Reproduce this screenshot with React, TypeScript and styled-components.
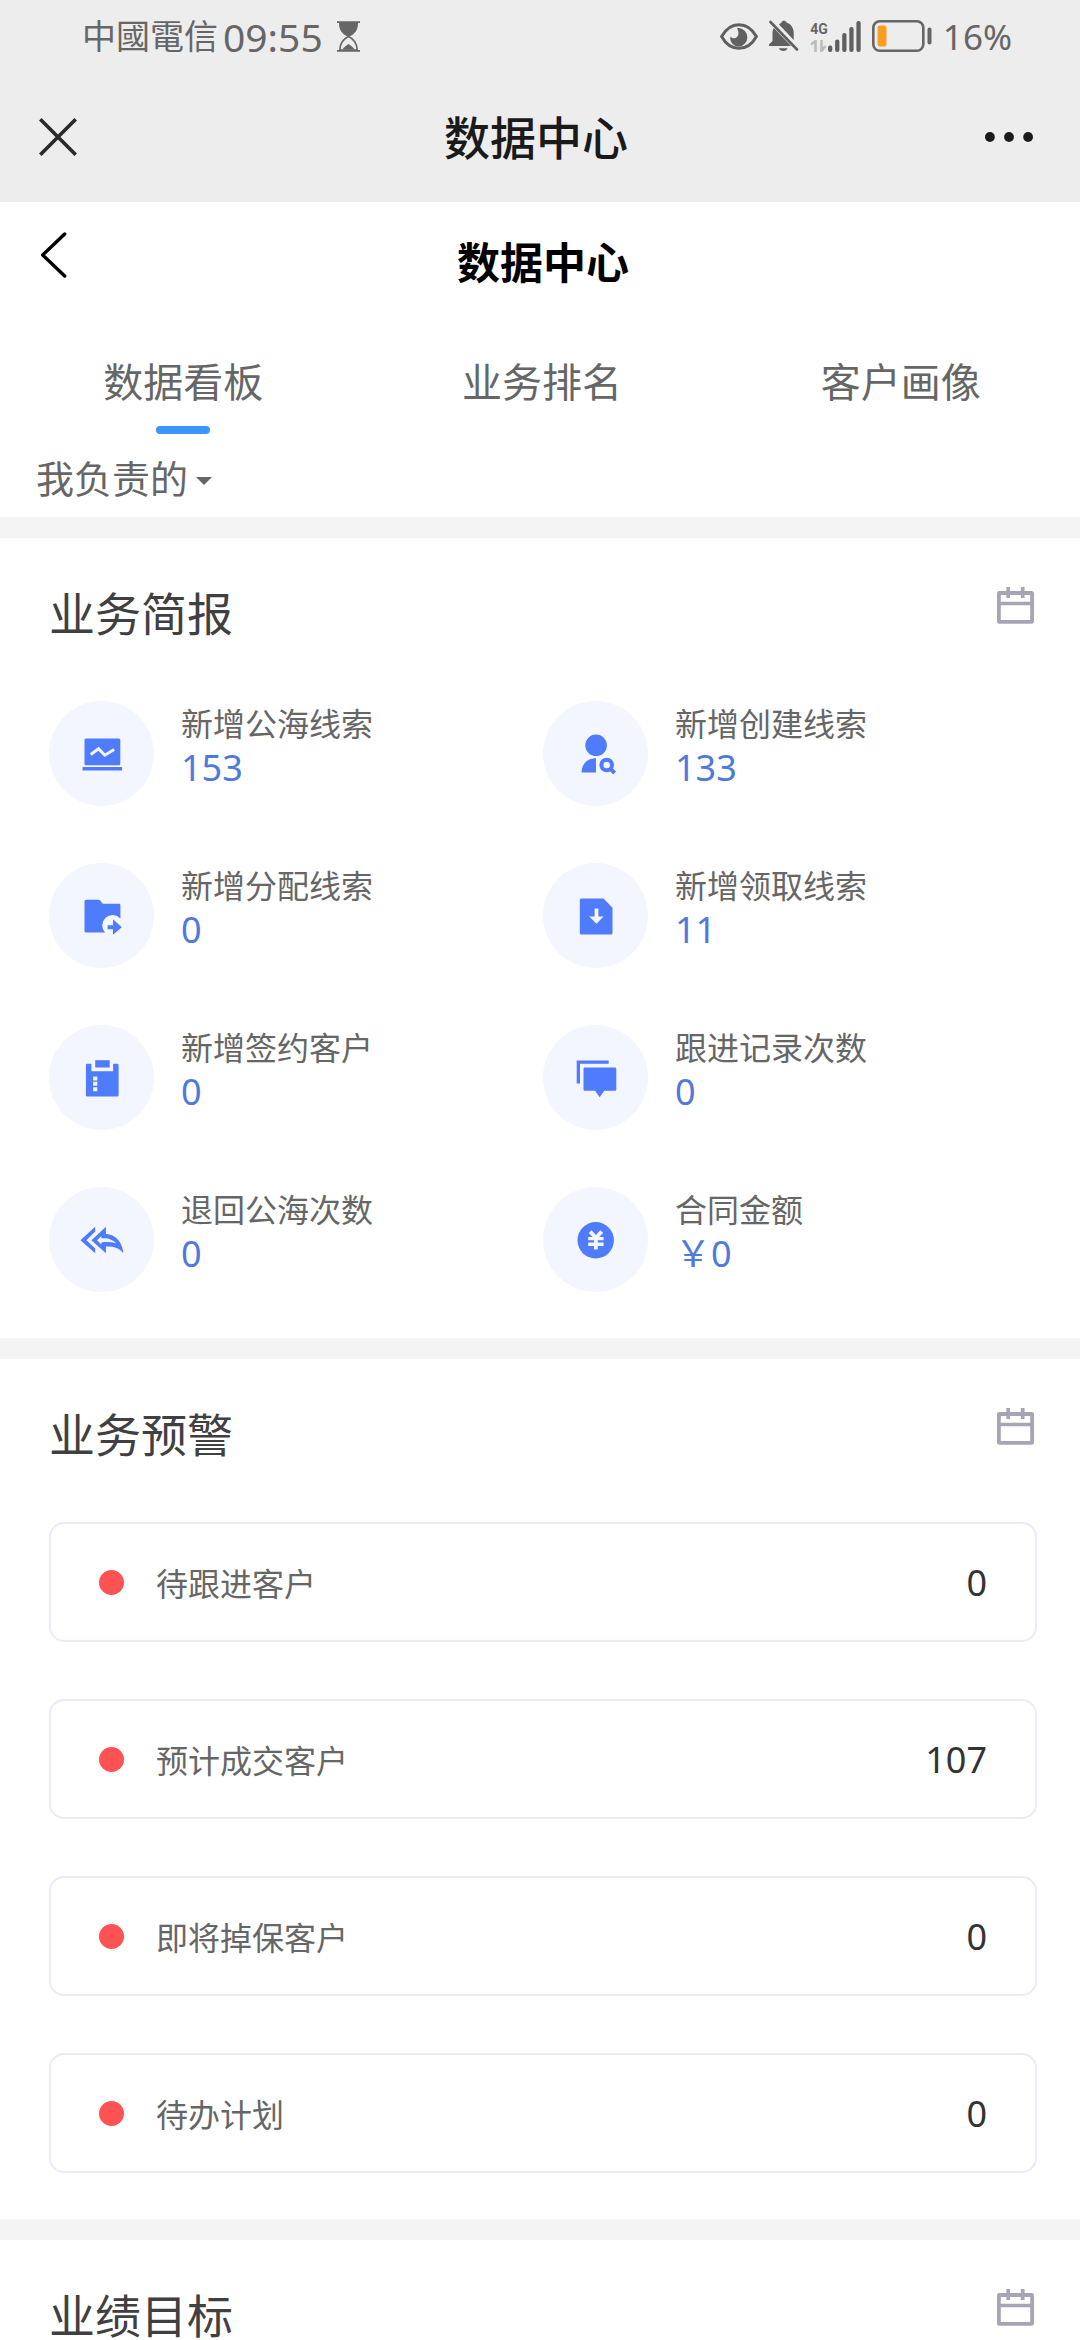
import React, { useState } from 'react';
import styled, { createGlobalStyle } from 'styled-components';

const GlobalStyle = createGlobalStyle`
  *, *::before, *::after { box-sizing: border-box; }
  body {
    margin: 0;
    background: #fff;
    color: #666;
    font-family: "Noto Sans", "Noto Sans CJK SC", sans-serif;
    font-size: 32px;
  }
  h1, h2, p, ul { margin: 0; padding: 0; }
  ul { list-style: none; }
  button, select { font: inherit; color: inherit; }
  svg { display: block; }
`;

const TopArea = styled.header`
  background: #ededed;
`;

const StatusBar = styled.div`
  display: flex;
  align-items: center;
  justify-content: space-between;
  height: 72px;
  padding: 0 68px 0 82px;
`;

const StatusGroup = styled.div<{ $gap: number }>`
  display: flex;
  align-items: center;
  gap: ${(p) => p.$gap}px;
`;

const Carrier = styled.span`
  font-family: "Noto Sans", "Noto Sans CJK TC", sans-serif;
  font-size: 34px;
  line-height: 44px;
`;

const Clock = styled.time`
  margin: 0 14px 0 5px;
  padding-top: 2px;
  font-size: 39px;
  line-height: 44px;
`;

const Percent = styled.span`
  padding-top: 2px;
  font-size: 35px;
  line-height: 44px;
`;

const Network = styled.div`
  display: flex;
  align-items: flex-end;
`;

const NetworkType = styled.div`
  display: flex;
  flex-direction: column;
  gap: 3px;
  font-family: Roboto, sans-serif;
  font-size: 14px;
  font-weight: 700;
  line-height: 16px;
`;

const NavBar = styled.div`
  display: grid;
  grid-template-columns: 1fr auto 1fr;
  align-items: center;
  height: 130px;
  padding: 0 42px 0 34px;
  color: #1a1a1a;
`;

const NavTitle = styled.p`
  font-size: 46px;
  font-weight: 500;
  line-height: 56px;
`;

const IconButton = styled.button<{ $end?: boolean }>`
  justify-self: ${(p) => (p.$end ? 'end' : 'start')};
  padding: 5px;
  border: 0;
  background: none;
  cursor: pointer;
`;

const PageHeader = styled.div`
  display: grid;
  grid-template-columns: 1fr auto 1fr;
  align-items: center;
  height: 122px;
  padding: 0 30px 0 36px;
  color: #000;
`;

const BackButton = styled(IconButton)`
  align-self: start;
  margin-top: 25px;
`;

const PageTitle = styled.h1`
  font-size: 43px;
  font-weight: 700;
  line-height: 56px;
`;

const Tabs = styled.div`
  display: flex;
  padding-left: 4px;
`;

const Tab = styled.button<{ $active: boolean }>`
  flex: 1;
  display: flex;
  flex-direction: column;
  align-items: center;
  gap: 18px;
  padding: 32px 0 0;
  border: 0;
  background: none;
  font-size: 40px;
  line-height: 52px;
  cursor: pointer;

  &::after {
    content: '';
    width: 54px;
    height: 8px;
    border-radius: 4px;
    background: ${(p) => (p.$active ? '#3b95fb' : 'transparent')};
  }
`;

const Filter = styled.label`
  display: flex;
  align-items: center;
  gap: 7px;
  padding: 20px 36px 15px;
`;

const FilterSelect = styled.select`
  appearance: none;
  padding: 0;
  border: 0;
  background: none;
  font-size: 38px;
  line-height: 48px;
`;

const Caret = styled.span`
  margin-top: 6px;
  border: 8px solid transparent;
  border-top-color: #666;
  border-bottom: 0;
  pointer-events: none;
`;

const Section = styled.section<{ $last?: boolean }>`
  padding: 49px 43px ${(p) => (p.$last ? 0 : 46)}px 49px;
  border-top: 21px solid #f4f4f4;
`;

const SectionHead = styled.div`
  display: flex;
  align-items: flex-start;
  justify-content: space-between;
`;

const SectionTitle = styled.h2`
  padding-top: 3px;
  color: #404040;
  font-size: 46px;
  font-weight: 400;
  line-height: 46px;
`;

const CalendarButton = styled.button`
  padding: 0 3px;
  border: 0;
  background: none;
  cursor: pointer;
`;

const Metrics = styled.ul`
  display: grid;
  grid-template-columns: 1fr 1fr;
  row-gap: 57px;
  padding-top: 65px;
`;

const Metric = styled.li`
  display: flex;
  gap: 27px;
`;

const Badge = styled.span`
  display: grid;
  place-items: center;
  flex: none;
  width: 105px;
  height: 105px;
  border-radius: 50%;
  background: #f3f6ff;
`;

const MetricText = styled.div`
  display: flex;
  flex-direction: column;
  padding-top: 1px;
  line-height: 44px;
`;

const MetricValue = styled.span`
  color: #5079dc;
  font-size: 36px;
`;

const Alerts = styled.ul`
  display: flex;
  flex-direction: column;
  gap: 57px;
  padding-top: 65px;
`;

const Alert = styled.li`
  display: flex;
  align-items: center;
  gap: 32px;
  height: 120px;
  padding: 0 48px;
  border: 2px solid #ebeaf6;
  border-radius: 15px;
`;

const Dot = styled.span`
  width: 25px;
  height: 25px;
  border-radius: 50%;
  background: #ff5252;
`;

const AlertValue = styled.span`
  margin-left: auto;
  color: #333;
  font-size: 36px;
`;

const BLUE = '#4f7bfd';
const PALE = '#f3f6ff';

const Glyph = ({ children }: { children: React.ReactNode }) => (
  <svg width="48" height="48" viewBox="0 0 48 48" fill={BLUE} aria-hidden="true">
    {children}
  </svg>
);

const LaptopIcon = () => (
  <Glyph>
    <rect x="6.5" y="8.5" width="35.8" height="26.7" rx="1.5" />
    <rect x="4.5" y="37" width="39.6" height="3.6" rx="0.6" />
    <path d="M12.7 24.5 20.6 18.8 26.8 25.2 36.1 19.5" fill="none" stroke={PALE} strokeWidth="3" />
  </Glyph>
);

const PersonSearchIcon = () => (
  <Glyph>
    <circle cx="24.1" cy="15.3" r="10.8" />
    <path d="M24 28.2V42.5H9.6C9.6 33.8 15.6 28.2 24 28.2Z" />
    <circle cx="34.7" cy="35" r="5.3" fill="none" stroke={BLUE} strokeWidth="4" />
    <path d="M38.2 38.6 42.6 43" stroke={BLUE} strokeWidth="4" />
  </Glyph>
);

const FolderIcon = () => (
  <Glyph>
    <path d="M8 7.8H20.8Q21.6 7.8 22.2 8.6L24.8 11.8H41.2Q42.4 11.8 42.4 13V26.5A10.3 10.3 0 0 0 27 40.6H8Q6.5 40.6 6.5 39.2V9.3Q6.5 7.8 8 7.8Z" />
    <path d="M29.6 33.2H35V27.2L43.8 35.2 35 42.8V37.2H29.6Z" />
  </Glyph>
);

const FileDownIcon = () => (
  <Glyph>
    <path d="M9.2 6.5H31.5L40.5 15.8V41Q40.5 42.5 39 42.5H9.2Q7.8 42.5 7.8 41V8Q7.8 6.5 9.2 6.5Z" />
    <path d="M22.6 16.5H26.4V24.5H31.5L24.5 31.8 17.2 24.5H22.6Z" fill={PALE} />
  </Glyph>
);

const ClipboardIcon = () => (
  <Glyph>
    <path d="M9.2 9.8H13.4V17.2H35.1V9.8H39.2Q40.6 9.8 40.6 11.2V41Q40.6 42.5 39.2 42.5H9.2Q7.9 42.5 7.9 41V11.2Q7.9 9.8 9.2 9.8Z" />
    <rect x="17.2" y="6.2" width="14.5" height="7.3" />
    <path d="M15.1 22.5h4.2v4h-4.2zM15.1 27.8h4.2v4h-4.2zM15.1 33.2h4.2v4h-4.2z" fill={PALE} />
  </Glyph>
);

const ChatIcon = () => (
  <Glyph>
    <path d="M4.7 6.5H36.7V9.8H8V29.5H4.7Z" />
    <path d="M12.9 13.5H42.9Q44.3 13.5 44.3 14.9V35.4Q44.3 36.8 42.9 36.8H32.3L27.7 43.2 23.1 36.8H12.9Q11.5 36.8 11.5 35.4V14.9Q11.5 13.5 12.9 13.5Z" />
  </Glyph>
);

const ReplyAllIcon = () => (
  <Glyph>
    <path d="M17.2 10.8V15.6L8.4 24.2 17.2 32.4V37.2L2.4 24.2Z" />
    <path d="M27.9 10.8V17.9C37.5 18.5 44.3 25.5 45.4 37.2 41 31.8 35.5 30.3 27.9 30.5V37.2L13.4 24.2Z" />
    <path d="M19 24.2 23.4 19.9V22.4C30 21.6 34.8 23.6 38.4 27.6 33.2 25.8 28 25.8 23.4 26.4V28.6Z" fill={PALE} />
  </Glyph>
);

const YuanIcon = () => (
  <Glyph>
    <circle cx="23.7" cy="24.3" r="18.2" />
    <path d="M18.2 15.6 23.9 21.8 29.7 15.6M23.9 20.6V33.6" fill="none" stroke={PALE} strokeWidth="3.8" />
    <path d="M16.2 22.6H31.6M16.2 28.2H31.6" fill="none" stroke={PALE} strokeWidth="3.4" />
  </Glyph>
);

const CalendarIcon = () => (
  <svg width="37" height="37" viewBox="0 0 37 37" fill="none" stroke="#a6a5b5" aria-hidden="true">
    <rect x="1.9" y="6" width="33.2" height="28.9" rx="0.5" strokeWidth="3.8" />
    <path d="M2 16.5H35" strokeWidth="3.3" />
    <path d="M11.2 0V11M25.7 0V11" strokeWidth="3.7" />
  </svg>
);

const HourglassIcon = () => (
  <svg width="23" height="31" viewBox="0 0 23 31" aria-hidden="true">
    <path d="M0 .2H23V2H0ZM0 29H23V30.8H0Z" fill="#666" />
    <path d="M2 2H21C21 9.5 17.5 13 12.5 15.5H10.5C5.5 13 2 9.5 2 2Z" fill="#666" />
    <path d="M11.5 15.5C6 18 3 22 2.8 29H20.2C20 22 17 18 11.5 15.5Z" fill="none" stroke="#666" strokeWidth="1.7" />
    <path d="M5.5 28.5C7 26 9 25 11.5 23 14 25 16 26 17.5 28.5Z" fill="#666" />
  </svg>
);

const EyeIcon = () => (
  <svg width="38" height="27" viewBox="0 0 38 27" aria-hidden="true">
    <path d="M1.6 13.5C6 5.5 12 1.7 19 1.7S32 5.5 36.4 13.5C32 21.5 26 25.3 19 25.3S6 21.5 1.6 13.5Z" fill="none" stroke="#606060" strokeWidth="3" />
    <path d="M17 5C18.5 8 19.5 11.5 17 14 15 16 12 15.5 10.3 13.5 9.5 19 13.5 23.5 19 23.5A9.3 9.3 0 0 0 19 5Z" fill="#606060" />
  </svg>
);

const BellOffIcon = () => (
  <svg width="30" height="32" viewBox="0 0 30 32" fill="#606060" aria-hidden="true">
    <path d="M10 4.5C11 3.5 12 3 12.5 2.5 13 0 17 0 17.5 2.5 22 4 24.5 8 24.7 12V20Z" />
    <path d="M4.8 8 22 26H0V24.5L3.5 21V13C3.5 11 4 9.5 4.8 8Z" />
    <path d="M1.5 2 28 29.5" stroke="#606060" strokeWidth="2.6" strokeLinecap="round" />
    <path d="M10 28.3H18.5C18 32 10.5 32 10 28.3Z" />
  </svg>
);

const DataArrowsIcon = () => (
  <svg width="17" height="12" viewBox="0 0 17 12" fill="none" stroke="#bcbcbc" strokeWidth="2.6" aria-hidden="true">
    <path d="M1 4.5 5.5 1V12M11.5 0V11L15.5 6" />
  </svg>
);

const SignalIcon = () => (
  <svg width="33" height="31" viewBox="0 0 33 31" fill="#606060" aria-hidden="true">
    <rect x="0" y="24.5" width="4.3" height="6.5" rx="2" />
    <rect x="7.1" y="18.5" width="4.3" height="12.5" rx="2" />
    <rect x="14.2" y="12" width="4.3" height="19" rx="2" />
    <rect x="21.3" y="6" width="4.3" height="25" rx="2" />
    <rect x="28.4" y="0" width="4.3" height="31" rx="2" />
  </svg>
);

const BatteryIcon = () => (
  <svg width="60" height="32" viewBox="0 0 60 32" aria-hidden="true">
    <rect x="1.3" y="1.3" width="50" height="29.4" rx="6.5" fill="none" stroke="#666" strokeWidth="2.6" />
    <rect x="5.5" y="5.5" width="9" height="21" rx="2.5" fill="#fb9d1e" />
    <rect x="55.5" y="7.5" width="4" height="17" rx="2" fill="#666" />
  </svg>
);

const CloseIcon = () => (
  <svg width="38" height="38" viewBox="0 0 38 38" stroke="#2a2a2a" strokeWidth="3.6" aria-hidden="true">
    <path d="M1.3 1.3 36.7 36.7M36.7 1.3 1.3 36.7" />
  </svg>
);

const MoreIcon = () => (
  <svg width="48" height="10" viewBox="0 0 48 10" fill="#1a1a1a" aria-hidden="true">
    <circle cx="4.9" cy="5" r="4.9" />
    <circle cx="24" cy="5" r="4.9" />
    <circle cx="43.1" cy="5" r="4.9" />
  </svg>
);

const BackIcon = () => (
  <svg width="26" height="46" viewBox="0 0 26 46" fill="none" stroke="#000" strokeWidth="3.4" strokeLinecap="round" strokeLinejoin="round" aria-hidden="true">
    <path d="M23.7 2 1.7 23 23.7 44" />
  </svg>
);

const tabs = ['数据看板', '业务排名', '客户画像'];

const metrics = [
  { label: '新增公海线索', value: '153', Icon: LaptopIcon },
  { label: '新增创建线索', value: '133', Icon: PersonSearchIcon },
  { label: '新增分配线索', value: '0', Icon: FolderIcon },
  { label: '新增领取线索', value: '11', Icon: FileDownIcon },
  { label: '新增签约客户', value: '0', Icon: ClipboardIcon },
  { label: '跟进记录次数', value: '0', Icon: ChatIcon },
  { label: '退回公海次数', value: '0', Icon: ReplyAllIcon },
  { label: '合同金额', value: '￥0', Icon: YuanIcon },
];

const alerts = [
  { label: '待跟进客户', value: '0' },
  { label: '预计成交客户', value: '107' },
  { label: '即将掉保客户', value: '0' },
  { label: '待办计划', value: '0' },
];

const SectionHeader = ({ title }: { title: string }) => (
  <SectionHead>
    <SectionTitle>{title}</SectionTitle>
    <CalendarButton type="button" aria-label="选择日期">
      <CalendarIcon />
    </CalendarButton>
  </SectionHead>
);

export default function App() {
  const [active, setActive] = useState(0);

  return (
    <>
      <GlobalStyle />
      <TopArea>
        <StatusBar>
          <StatusGroup $gap={0}>
            <Carrier>中國電信</Carrier>
            <Clock>09:55</Clock>
            <HourglassIcon />
          </StatusGroup>
          <StatusGroup $gap={11}>
            <EyeIcon />
            <BellOffIcon />
            <Network>
              <NetworkType>
                4G
                <DataArrowsIcon />
              </NetworkType>
              <SignalIcon />
            </Network>
            <BatteryIcon />
            <Percent>16%</Percent>
          </StatusGroup>
        </StatusBar>
        <NavBar>
          <IconButton type="button" aria-label="关闭">
            <CloseIcon />
          </IconButton>
          <NavTitle>数据中心</NavTitle>
          <IconButton type="button" aria-label="更多" $end>
            <MoreIcon />
          </IconButton>
        </NavBar>
      </TopArea>
      <main>
        <PageHeader>
          <BackButton type="button" aria-label="返回">
            <BackIcon />
          </BackButton>
          <PageTitle>数据中心</PageTitle>
        </PageHeader>
        <Tabs role="tablist">
          {tabs.map((name, i) => (
            <Tab
              key={name}
              type="button"
              role="tab"
              aria-selected={i === active}
              $active={i === active}
              onClick={() => setActive(i)}
            >
              {name}
            </Tab>
          ))}
        </Tabs>
        <Filter>
          <FilterSelect aria-label="负责范围">
            <option>我负责的</option>
          </FilterSelect>
          <Caret />
        </Filter>
        <Section>
          <SectionHeader title="业务简报" />
          <Metrics>
            {metrics.map(({ label, value, Icon }) => (
              <Metric key={label}>
                <Badge>
                  <Icon />
                </Badge>
                <MetricText>
                  <span>{label}</span>
                  <MetricValue>{value}</MetricValue>
                </MetricText>
              </Metric>
            ))}
          </Metrics>
        </Section>
        <Section>
          <SectionHeader title="业务预警" />
          <Alerts>
            {alerts.map(({ label, value }) => (
              <Alert key={label}>
                <Dot />
                <span>{label}</span>
                <AlertValue>{value}</AlertValue>
              </Alert>
            ))}
          </Alerts>
        </Section>
        <Section $last>
          <SectionHeader title="业绩目标" />
        </Section>
      </main>
    </>
  );
}
